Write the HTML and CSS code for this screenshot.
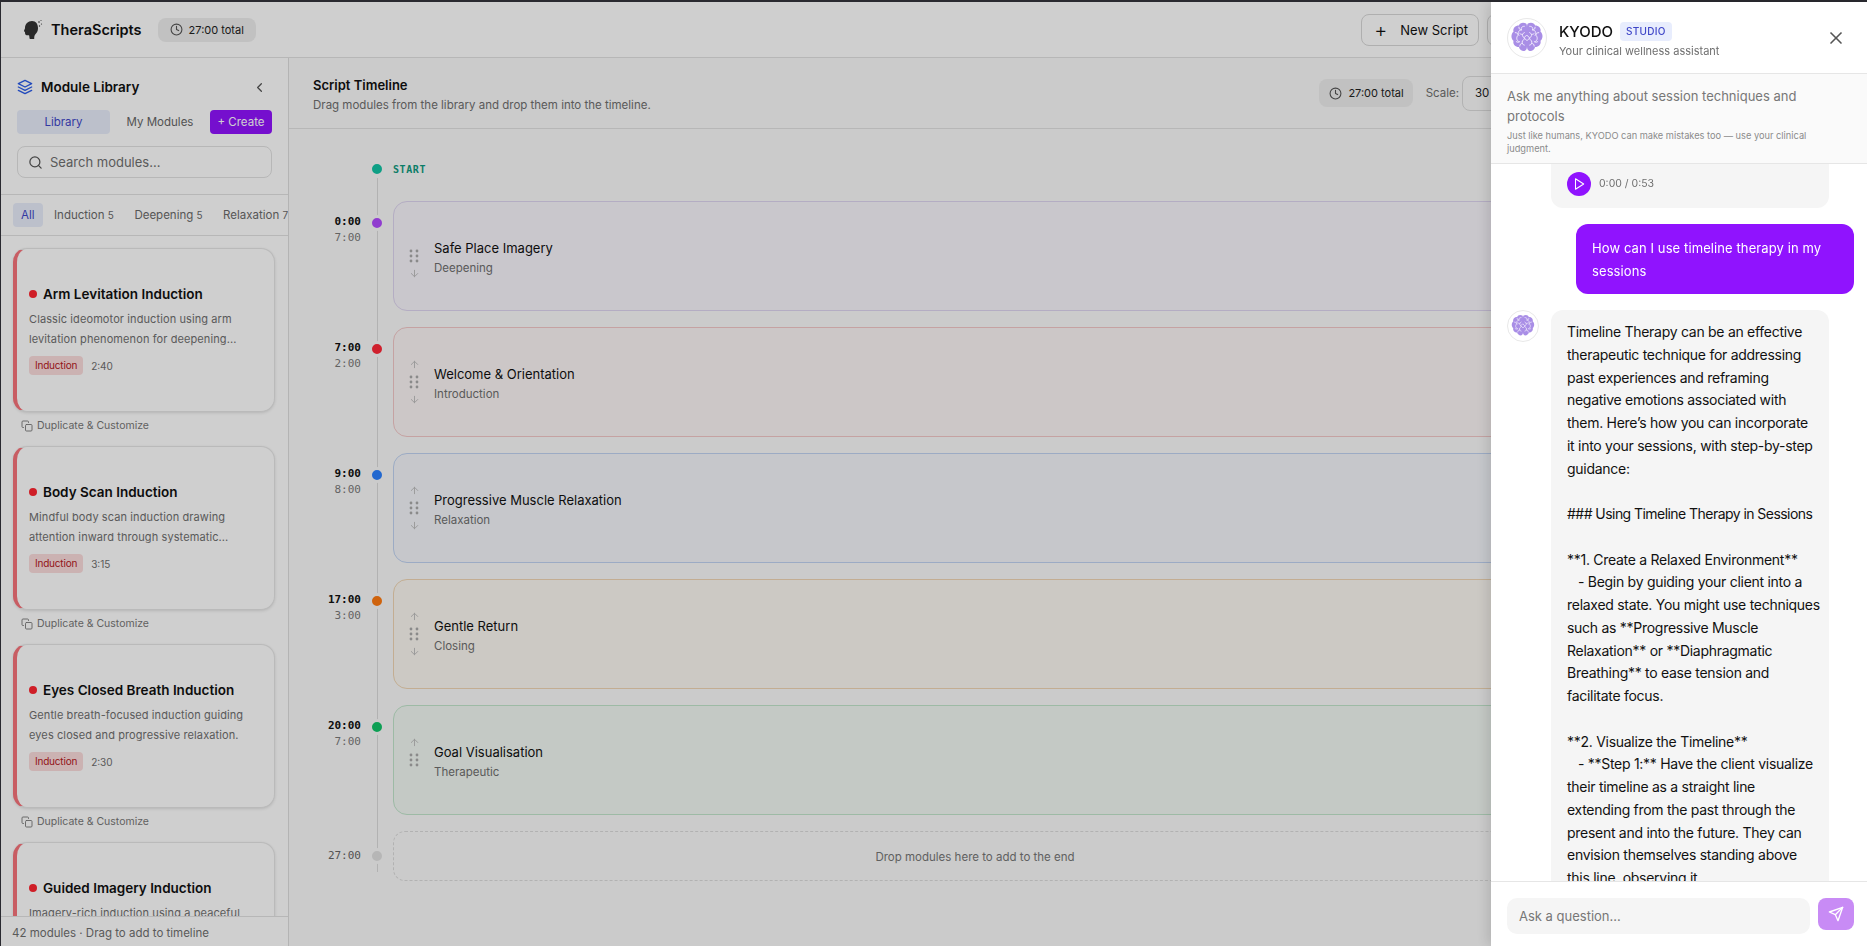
FILE: index.html
```html
<!DOCTYPE html>
<html lang="en">

<head>
  <meta charset="UTF-8">
  <title>TheraScripts</title>
  <link rel="stylesheet" href="styles.css">
</head>

<body>
  <svg class="sprite" xmlns="http://www.w3.org/2000/svg">
    <symbol id="i-clock" viewBox="0 0 24 24"><circle cx="12" cy="12" r="10"/><path d="M12 6v6l4 2"/></symbol>
    <symbol id="i-layers" viewBox="0 0 24 24"><path d="M12 2 2 7l10 5 10-5-10-5z"/><path d="m2 17 10 5 10-5"/><path d="m2 12 10 5 10-5"/></symbol>
    <symbol id="i-search" viewBox="0 0 24 24"><circle cx="11" cy="11" r="8"/><path d="m21 21-4.35-4.35"/></symbol>
    <symbol id="i-copy" viewBox="0 0 24 24"><rect x="9" y="9" width="13" height="13" rx="2"/><path d="M5 15H4a2 2 0 0 1-2-2V4a2 2 0 0 1 2-2h9a2 2 0 0 1 2 2v1"/></symbol>
    <symbol id="i-up" viewBox="0 0 24 24"><path d="M12 19V5"/><path d="m5 12 7-7 7 7"/></symbol>
    <symbol id="i-down" viewBox="0 0 24 24"><path d="M12 5v14"/><path d="m19 12-7 7-7-7"/></symbol>
    <symbol id="i-grip" viewBox="0 0 10 14"><circle cx="2" cy="2" r="1.4"/><circle cx="8" cy="2" r="1.4"/><circle cx="2" cy="7" r="1.4"/><circle cx="8" cy="7" r="1.4"/><circle cx="2" cy="12" r="1.4"/><circle cx="8" cy="12" r="1.4"/></symbol>
    <symbol id="i-brain" viewBox="0 0 40 40">
      <path class="lobe" d="M19 4c-3-2-7-1-8 2-4 0-7 3-6 7-3 2-3 8 0 10-1 4 2 7 6 7 1 4 6 6 8 3 1-1 1-3 1-5V9c0-2 0-4-1-5z"/>
      <path class="lobe" d="M21 4c3-2 7-1 8 2 4 0 7 3 6 7 3 2 3 8 0 10 1 4-2 7-6 7-1 4-6 6-8 3-1-1-1-3-1-5V9c0-2 0-4 1-5z"/>
      <path class="fold" d="M17 7c-3 0-4 2-3 4-3 0-5 3-3 6M7 14c2 0 3 1 3 3-2 2-2 6 1 7M17 14c-2 1-3 3-1 5 2 1 1 3-1 4-1 2 0 5 2 5M11 8c0 2 1 3 3 3M8 24c1 1 3 1 4 0M12 29c0-2 1-3 3-3M15 16c-1 0-2 0-3-1"/>
      <path class="fold" d="M23 7c3 0 4 2 3 4 3 0 5 3 3 6M33 14c-2 0-3 1-3 3 2 2 2 6-1 7M23 14c2 1 3 3 1 5-2 1-1 3 1 4 1 2 0 5-2 5M29 8c0 2-1 3-3 3M32 24c-1 1-3 1-4 0M28 29c0-2-1-3-3-3M25 16c1 0 2 0 3-1"/>
      <path class="fold" d="M20 17l3 3-3 3-3-3z"/>
    </symbol>
  </svg>

  <div class="app">
    <header class="topbar">
      <svg class="logo" viewBox="0 0 20 22">
        <path d="M9 2c-4 0-7 3-7 7 0 1-1 2-1 3 0 .6 1 .7 1 1.200 0 1 0 2.300 1 2.800 1 .4 2 0 3 .3.500 1 .3 2.700.8 3.700h4.400c0-2 0-3 1-4.500 1.500-1.500 2.800-3.500 2.800-6C15 5 13 2 9 2z"/>
        <circle cx="16" cy="3" r=".8"/><circle cx="18.500" cy="5" r=".6"/><circle cx="16.500" cy="7" r=".7"/><circle cx="18" cy="1.500" r=".5"/>
      </svg>
      <span class="brand">TheraScripts</span>
      <span class="pill"><svg class="icon"><use href="#i-clock"/></svg>27:00 total</span>
      <div class="topbar-actions">
        <button class="btn"><span class="btn-plus">+</span>New Script</button>
        <button class="btn btn-more">Save</button>
      </div>
    </header>

    <div class="workspace">
      <aside class="library">
        <div class="library-top">
          <div class="library-title">
            <svg class="icon icon-blue"><use href="#i-layers"/></svg>
            <h2>Module Library</h2>
            <svg class="chevron" viewBox="0 0 24 24"><path d="m15 18-6-6 6-6"/></svg>
          </div>
          <div class="tabs">
            <button class="tab tab-active">Library</button>
            <button class="tab">My Modules</button>
            <button class="tab tab-create">+ Create</button>
          </div>
          <div class="search">
            <svg class="icon"><use href="#i-search"/></svg>
            <span>Search modules...</span>
          </div>
        </div>

        <div class="filters">
          <span class="chip chip-active">All</span>
          <span class="chip">Induction <small>5</small></span>
          <span class="chip">Deepening <small>5</small></span>
          <span class="chip">Relaxation <small>7</small></span>
        </div>

        <div class="module-list">
          <div class="module">
            <div class="module-card">
              <h3><i></i>Arm Levitation Induction</h3>
              <p>Classic ideomotor induction using arm levitation phenomenon for deepening...</p>
              <div class="module-meta"><span class="tag">Induction</span><span>2:40</span></div>
            </div>
            <div class="duplicate"><svg class="icon"><use href="#i-copy"/></svg>Duplicate &amp; Customize</div>
          </div>
          <div class="module">
            <div class="module-card">
              <h3><i></i>Body Scan Induction</h3>
              <p>Mindful body scan induction drawing attention inward through systematic...</p>
              <div class="module-meta"><span class="tag">Induction</span><span>3:15</span></div>
            </div>
            <div class="duplicate"><svg class="icon"><use href="#i-copy"/></svg>Duplicate &amp; Customize</div>
          </div>
          <div class="module">
            <div class="module-card">
              <h3><i></i>Eyes Closed Breath Induction</h3>
              <p>Gentle breath-focused induction guiding eyes closed and progressive relaxation.</p>
              <div class="module-meta"><span class="tag">Induction</span><span>2:30</span></div>
            </div>
            <div class="duplicate"><svg class="icon"><use href="#i-copy"/></svg>Duplicate &amp; Customize</div>
          </div>
          <div class="module">
            <div class="module-card">
              <h3><i></i>Guided Imagery Induction</h3>
              <p>Imagery-rich induction using a peaceful garden walk to settle the mind.</p>
              <div class="module-meta"><span class="tag">Induction</span><span>3:00</span></div>
            </div>
          </div>
        </div>

        <div class="library-foot">42 modules · Drag to add to timeline</div>
      </aside>

      <main class="editor">
        <div class="toolbar">
          <div>
            <h2>Script Timeline</h2>
            <p>Drag modules from the library and drop them into the timeline.</p>
          </div>
          <div class="toolbar-right">
            <span class="pill"><svg class="icon"><use href="#i-clock"/></svg>27:00 total</span>
            <label>Scale:</label>
            <span class="select">30 min</span>
          </div>
        </div>

        <div class="timeline">
          <div class="row row-start">
            <div class="times"></div>
            <span class="dot dot-start"></span>
            <span class="start-label">START</span>
          </div>

          <div class="row">
            <div class="times"><b>0:00</b><span>7:00</span></div>
            <span class="dot dot-purple"></span>
            <div class="block block-purple">
              <div class="handle">
                <svg class="arrow arrow-off"><use href="#i-up"/></svg>
                <svg class="grip"><use href="#i-grip"/></svg>
                <svg class="arrow"><use href="#i-down"/></svg>
              </div>
              <div class="block-text"><h4>Safe Place Imagery</h4><p>Deepening</p></div>
            </div>
          </div>

          <div class="row">
            <div class="times"><b>7:00</b><span>2:00</span></div>
            <span class="dot dot-red"></span>
            <div class="block block-red">
              <div class="handle">
                <svg class="arrow"><use href="#i-up"/></svg>
                <svg class="grip"><use href="#i-grip"/></svg>
                <svg class="arrow"><use href="#i-down"/></svg>
              </div>
              <div class="block-text"><h4>Welcome &amp; Orientation</h4><p>Introduction</p></div>
            </div>
          </div>

          <div class="row">
            <div class="times"><b>9:00</b><span>8:00</span></div>
            <span class="dot dot-blue"></span>
            <div class="block block-blue">
              <div class="handle">
                <svg class="arrow"><use href="#i-up"/></svg>
                <svg class="grip"><use href="#i-grip"/></svg>
                <svg class="arrow"><use href="#i-down"/></svg>
              </div>
              <div class="block-text"><h4>Progressive Muscle Relaxation</h4><p>Relaxation</p></div>
            </div>
          </div>

          <div class="row">
            <div class="times"><b>17:00</b><span>3:00</span></div>
            <span class="dot dot-orange"></span>
            <div class="block block-orange">
              <div class="handle">
                <svg class="arrow"><use href="#i-up"/></svg>
                <svg class="grip"><use href="#i-grip"/></svg>
                <svg class="arrow"><use href="#i-down"/></svg>
              </div>
              <div class="block-text"><h4>Gentle Return</h4><p>Closing</p></div>
            </div>
          </div>

          <div class="row">
            <div class="times"><b>20:00</b><span>7:00</span></div>
            <span class="dot dot-green"></span>
            <div class="block block-green">
              <div class="handle">
                <svg class="arrow"><use href="#i-up"/></svg>
                <svg class="grip"><use href="#i-grip"/></svg>
                <svg class="arrow arrow-off"><use href="#i-down"/></svg>
              </div>
              <div class="block-text"><h4>Goal Visualisation</h4><p>Therapeutic</p></div>
            </div>
          </div>

          <div class="row row-end">
            <div class="times"><b class="end-time">27:00</b></div>
            <span class="dot dot-end"></span>
            <div class="dropzone">Drop modules here to add to the end</div>
          </div>
        </div>
      </main>
    </div>
  </div>

  <div class="backdrop"></div>

  <section class="chat">
    <div class="chat-head">
      <span class="avatar"><svg><use href="#i-brain"/></svg></span>
      <div class="chat-title">
        <div><strong>KYODO</strong><span class="badge">STUDIO</span></div>
        <p>Your clinical wellness assistant</p>
      </div>
      <svg class="close" viewBox="0 0 24 24"><path d="M18 6 6 18"/><path d="m6 6 12 12"/></svg>
    </div>

    <div class="chat-intro">
      <p>Ask me anything about session techniques and protocols</p>
      <small>Just like humans, KYODO can make mistakes too — use your clinical judgment.</small>
    </div>

    <div class="chat-messages">
      <div class="bubble bubble-audio">
        <span class="play"><svg viewBox="0 0 24 24"><path d="M6 3l14 9-14 9z"/></svg></span>
        <span>0:00 / 0:53</span>
      </div>
      <div class="bubble bubble-user">How can I use timeline therapy in my sessions</div>
      <div class="bot-row">
        <span class="avatar avatar-small"><svg><use href="#i-brain"/></svg></span>
        <div class="bubble bubble-bot">Timeline Therapy can be an effective
therapeutic technique for addressing
past experiences and reframing
negative emotions associated with
them. Here’s how you can incorporate
it into your sessions, with step-by-step
guidance:

<span class="tight">### Using Timeline Therapy in Sessions</span>

**1. Create a Relaxed Environment**
   - Begin by guiding your client into a
relaxed state. You might use techniques
such as **Progressive Muscle
Relaxation** or **Diaphragmatic
Breathing** to ease tension and
facilitate focus.

**2. Visualize the Timeline**
   - **Step 1:** Have the client visualize
their timeline as a straight line
extending from the past through the
present and into the future. They can
envision themselves standing above
this line, observing it.</div>
      </div>
    </div>

    <div class="chat-input">
      <div class="ask">Ask a question...</div>
      <button class="send"><svg viewBox="0 0 24 24"><path d="M22 2 11 13"/><path d="M22 2 15 22 11 13 2 9z"/></svg></button>
    </div>
  </section>
</body>
</html>
```

FILE: styles.css
```css
:root {
  --purple: #9013fe;
  --line: #e6e6e6;
  --text: #111;
  --muted: #6f6f6f;
}

* {
  box-sizing: border-box;
}

html, body {
  margin: 0;
  height: 100%;
  overflow: hidden;
}

body {
  font-family: Inter, "Noto Sans", sans-serif;
  color: var(--text);
  background: #fff;
}

h2, h3, h4, p {
  margin: 0;
}

button {
  font: inherit;
  border: 0;
  background: none;
  padding: 0;
}

.sprite {
  display: none;
}

.icon {
  width: 14px;
  height: 14px;
  flex: none;
  fill: none;
  stroke: currentColor;
  stroke-width: 2;
  stroke-linecap: round;
  stroke-linejoin: round;
}

.app {
  height: 946px;
  display: flex;
  flex-direction: column;
  border-top: 2px solid #2a2a30;
  border-left: 1px solid #2a2a30;
}

/* top bar */
.topbar {
  height: 56px;
  flex: none;
  display: flex;
  align-items: center;
  padding-left: 22px;
  background: #fff;
  border-bottom: 1px solid #e2e2e2;
}

.logo {
  width: 20px;
  height: 22px;
  fill: #333;
  margin-right: 8px;
}

.brand {
  font-size: 14.500px;
  font-weight: 600;
  margin-right: 16px;
}

.pill {
  display: inline-flex;
  align-items: center;
  gap: 6px;
  height: 24px;
  padding: 0 12px;
  border-radius: 8px;
  font-size: 11px;
  background: #eee;
  color: #222;
}

.topbar .pill .icon,
.toolbar .pill .icon {
  width: 13px;
  height: 13px;
  color: #555;
}

.topbar-actions {
  margin-left: auto;
  display: flex;
  gap: 8px;
  padding-right: 320px;
}

.btn {
  height: 32px;
  display: flex;
  align-items: center;
  padding: 0 10px 0 12px;
  border: 1px solid #d8d8d8;
  border-radius: 8px;
  font-size: 13px;
  background: #fff;
  color: #111;
}

.btn-plus {
  font-size: 20px;
  font-weight: 300;
  width: 26px;
  text-align: left;
  line-height: 1;
}

.btn-more {
  width: 60px;
}

.workspace {
  flex: 1;
  display: flex;
  min-height: 0;
}

/* module library */
.library {
  width: 288px;
  flex: none;
  display: flex;
  flex-direction: column;
  background: #fff;
  border-right: 1px solid #dedede;
}

.library-top {
  height: 137px;
  flex: none;
  padding: 21px 16px 0;
  border-bottom: 1px solid #e2e2e2;
}

.library-title {
  display: flex;
  align-items: center;
  gap: 8px;
  height: 16px;
}

.library-title h2 {
  font-size: 13.500px;
  font-weight: 600;
}

.icon-blue {
  width: 16px;
  height: 16px;
  color: #2a5ce8;
}

.chevron {
  width: 15px;
  height: 15px;
  margin-left: auto;
  margin-right: 5px;
  fill: none;
  stroke: #555;
  stroke-width: 2;
  stroke-linecap: round;
  stroke-linejoin: round;
}

.tabs {
  display: flex;
  margin-top: 15px;
  width: 255px;
}

.tab {
  height: 24px;
  flex: 1;
  font-size: 11.500px;
  border-radius: 4px;
  color: #666;
}

.tab-active {
  flex: none;
  width: 93px;
  background: #e8edfb;
  color: #3f46c8;
}

.tab-create {
  flex: none;
  width: 62px;
  background: var(--purple);
  color: #fff;
}

.search {
  margin-top: 12px;
  width: 255px;
  height: 32px;
  display: flex;
  align-items: center;
  gap: 7px;
  padding: 0 10px;
  border: 1.500px solid #e2e2e2;
  border-radius: 8px;
  font-size: 13px;
  color: #6f6f6f;
}

.search .icon {
  width: 15px;
  height: 15px;
  color: #555;
}

.filters {
  height: 41px;
  flex: none;
  display: flex;
  align-items: center;
  padding: 0 12px;
  gap: 2.500px;
  overflow: hidden;
  white-space: nowrap;
  border-bottom: 1px solid #e2e2e2;
}

.chip {
  height: 24px;
  line-height: 24px;
  padding: 0 9px;
  border-radius: 4px;
  font-size: 11.500px;
  color: #6b6b6b;
}

.chip small {
  font-size: 10px;
}

.chip-active {
  padding: 0 8px;
  background: #e8edfb;
  color: #3f46c8;
}

.module-list {
  flex: 1;
  min-height: 0;
  overflow: hidden;
  padding: 12px 12px 0;
}

.module {
  height: 198px;
}

.module-card {
  height: 164px;
  width: 262px;
  padding: 36px 14px 0 12px;
  border: 1px solid #e6e6e6;
  border-left: 4px solid #f7737b;
  border-radius: 14px;
  box-shadow: 0 1px 3px rgba(0, 0, 0, 0.12);
  background: #fff;
}

.module-card h3 {
  display: flex;
  align-items: center;
  gap: 6px;
  font-size: 13.500px;
  font-weight: 600;
  line-height: 18px;
}

.module-card h3 i {
  width: 8px;
  height: 8px;
  border-radius: 50%;
  background: #ff2630;
}

.module-card p {
  margin-top: 6px;
  font-size: 11px;
  letter-spacing: 0.1px;
  line-height: 20px;
  color: #6f6f6f;
}

.module-meta {
  margin-top: 7px;
  display: flex;
  align-items: center;
  gap: 8px;
  font-size: 10px;
  color: #6f6f6f;
}

.tag {
  height: 19px;
  line-height: 19px;
  padding: 0 6px;
  border-radius: 4px;
  letter-spacing: -0.2px;
  background: #fbdcdc;
  color: #b51822;
}

.duplicate {
  display: flex;
  align-items: center;
  gap: 4px;
  margin: 6px 0 0 8px;
  font-size: 10.500px;
  line-height: 16px;
  color: #777;
}

.duplicate .icon {
  width: 12px;
  height: 12px;
  stroke-width: 1.800;
}

.library-foot {
  height: 30px;
  flex: none;
  padding: 6px 0 0 11px;
  line-height: 20px;
  font-size: 11.500px;
  color: #6f6f6f;
  background: #fff;
  border-top: 1px solid #e2e2e2;
}

/* timeline editor */
.editor {
  flex: 1;
  min-width: 0;
  background: #fafafa;
}

.toolbar {
  height: 71px;
  display: flex;
  align-items: center;
  justify-content: space-between;
  padding: 4px 24px 0;
  background: #fafafa;
  border-bottom: 1px solid #e2e2e2;
}

.toolbar h2 {
  font-size: 13px;
  font-weight: 600;
  line-height: 20px;
}

.toolbar p {
  font-size: 11.500px;
  line-height: 20px;
  color: #6f6f6f;
}

.toolbar-right {
  display: flex;
  align-items: center;
  padding-right: 291px;
  margin-top: -4px;
  font-size: 11.500px;
  color: #6f6f6f;
}

.toolbar-right .pill {
  height: 28px;
  padding: 0 9px 0 10px;
  margin-right: 13px;
}

.select {
  width: 90px;
  height: 35px;
  line-height: 33px;
  margin-left: 3px;
  padding-left: 12px;
  border: 1px solid #dcdcdc;
  border-radius: 8px;
  color: #222;
}

.timeline {
  position: relative;
  max-width: 1268px;
  padding-top: 32px;
}

/* rail behind the dots */
.timeline::before {
  content: "";
  position: absolute;
  left: 88px;
  top: 49px;
  bottom: 9px;
  width: 1px;
  background: #dcdcdc;
}

.row {
  position: relative;
  display: flex;
  align-items: flex-start;
  margin-bottom: 16px;
}

.row-start {
  align-items: center;
  height: 16px;
  margin-bottom: 24px;
}

.row-end {
  align-items: center;
  margin-bottom: 0;
}

.times {
  width: 72px;
  flex: none;
  padding-top: 13px;
  text-align: right;
  font-family: "DejaVu Sans Mono", monospace;
  font-size: 11px;
  line-height: 16px;
  color: #7b7b7b;
}

.row-start .times,
.row-end .times {
  padding-top: 0;
}

.times b,
.times span {
  display: block;
}

.times b {
  color: #111;
}

.times .end-time {
  font-weight: 400;
  color: #666;
}

.dot {
  position: relative;
  width: 16px;
  height: 16px;
  flex: none;
  margin: 14px 8px 0 8px;
  border-radius: 50%;
  border: 3px solid #fafafa;
}

.row-start .dot,
.row-end .dot {
  margin-top: 0;
}

.dot-start { background: #12c4a4; }
.dot-purple { background: #b24bff; }
.dot-red { background: #ff2838; }
.dot-blue { background: #2a80ff; }
.dot-orange { background: #ff7a10; }
.dot-green { background: #10c468; }
.dot-end { background: #e0e0e0; }

.start-label {
  font-family: "DejaVu Sans Mono", monospace;
  font-size: 10px;
  font-weight: 700;
  letter-spacing: 0.6px;
  color: #0f9b80;
}

.block {
  flex: 1;
  height: 110px;
  display: flex;
  align-items: center;
  gap: 15px;
  padding-left: 15px;
  border: 1px solid;
  border-radius: 14px;
}

.block-text {
  padding-top: 4px;
}

.block h4 {
  font-size: 13px;
  font-weight: 400;
  line-height: 20px;
}

.block p {
  font-size: 11.500px;
  line-height: 20px;
  color: #6f6f6f;
}

.block-purple { background: #f8f5fc; border-color: #ded5f0; }
.block-red { background: #fcf6f6; border-color: #f3c8c8; }
.block-blue { background: #f4f6fb; border-color: #c0d3f2; }
.block-orange { background: #fcf8f2; border-color: #f0d6b4; }
.block-green { background: #f2f8f3; border-color: #c2e6cc; }

.handle {
  width: 10px;
  display: flex;
  flex-direction: column;
  align-items: center;
  gap: 5px;
}

.grip {
  width: 10px;
  height: 14px;
  fill: #aaa;
}

.arrow {
  width: 11px;
  height: 11px;
  fill: none;
  stroke: #bbb;
  stroke-width: 2;
  stroke-linecap: round;
  stroke-linejoin: round;
}

.arrow-off {
  visibility: hidden;
}

.dropzone {
  flex: 1;
  height: 50px;
  line-height: 50px;
  text-align: center;
  font-size: 11.500px;
  color: #777;
  border: 1px dashed #dcdcdc;
  border-radius: 12px;
}

/* overlay and assistant panel */
.backdrop {
  position: fixed;
  inset: 2px 0 0 1px;
  background: rgba(0, 0, 0, 0.19);
}

.chat {
  position: fixed;
  top: 2px;
  right: 0;
  bottom: 0;
  width: 376px;
  display: flex;
  flex-direction: column;
  background: #fff;
  box-shadow: -4px 0 12px rgba(0, 0, 0, 0.12);
}

.chat-head {
  height: 72px;
  flex: none;
  display: flex;
  align-items: center;
  padding: 0 16px;
  gap: 12px;
  border-bottom: 1px solid var(--line);
}

.avatar {
  width: 40px;
  height: 40px;
  flex: none;
  display: flex;
  align-items: center;
  justify-content: center;
  border: 1px solid #e8e8e8;
  border-radius: 50%;
  background: #fff;
}

.avatar svg {
  width: 36px;
  height: 36px;
}

.avatar-small {
  width: 32px;
  height: 32px;
}

.avatar-small svg {
  width: 26px;
  height: 26px;
}

.lobe {
  fill: #a98ee6;
}

.fold {
  fill: none;
  stroke: #efe9fb;
  stroke-width: 1.100;
  stroke-linecap: round;
}

.chat-title {
  margin-top: 7px;
}

.chat-title strong {
  font-size: 15px;
  font-weight: 500;
}

.chat-title > div {
  display: flex;
  align-items: center;
  gap: 7px;
  height: 20px;
}

.chat-title p {
  font-size: 11px;
  line-height: 20px;
  color: #6f6f6f;
}

.badge {
  font-size: 10px;
  font-weight: 500;
  line-height: 19px;
  padding: 0 6px;
  border-radius: 4px;
  letter-spacing: 0.3px;
  color: #3f46c8;
  background: #e8edfd;
}

.close {
  width: 20px;
  height: 20px;
  margin-left: auto;
  margin-right: 5px;
  fill: none;
  stroke: #555;
  stroke-width: 2;
  stroke-linecap: round;
}

.chat-intro {
  height: 90px;
  flex: none;
  padding: 12px 16px 0;
  background: #fafafa;
  border-bottom: 1px solid var(--line);
}

.chat-intro p {
  font-size: 13px;
  line-height: 20px;
  color: #777;
}

.chat-intro small {
  display: block;
  font-size: 9.250px;
  line-height: 13px;
  margin-top: 3px;
  color: #8a8a8a;
}

.chat-messages {
  flex: 1;
  min-height: 0;
  overflow: hidden;
  display: flex;
  flex-direction: column;
  padding: 0 13px 0 16px;
}

.bubble {
  width: 278px;
  flex: none;
  padding: 0 16px;
  font-size: 14px;
  line-height: 22.750px;
  background: #f5f5f5;
  border-radius: 12px;
}

.bubble-audio {
  height: 44px;
  margin-left: 44px;
  display: flex;
  align-items: center;
  gap: 8px;
  padding: 0 16px 4px;
  border-radius: 0 0 12px 12px;
  font-size: 10.500px;
  color: #6f6f6f;
}

.play {
  width: 24px;
  height: 24px;
  display: flex;
  align-items: center;
  justify-content: center;
  border-radius: 50%;
  background: var(--purple);
}

.play svg {
  width: 14px;
  height: 14px;
  fill: none;
  stroke: #fff;
  stroke-width: 1.800;
  stroke-linejoin: round;
}

.bubble-user {
  margin: 16px 0 16px auto;
  padding: 13px 16px 11.500px;
  font-size: 13px;
  letter-spacing: 0.1px;
  color: #fff;
  background: var(--purple);
}

.bot-row {
  display: flex;
  align-items: flex-start;
  gap: 12px;
}

.bubble-bot {
  padding: 11px 0 11px 16px;
  white-space: pre;
  letter-spacing: -0.28px;
  color: #111;
}

.tight {
  letter-spacing: -0.55px;
}

.chat-input {
  height: 65px;
  flex: none;
  display: flex;
  align-items: flex-start;
  gap: 8px;
  padding: 16px 13px 0 16px;
  border-top: 1px solid var(--line);
  background: #fff;
}

.ask {
  flex: 1;
  height: 36px;
  line-height: 36px;
  padding-left: 12px;
  font-size: 13px;
  color: #777;
  border-radius: 10px;
  background: #f5f5f5;
}

.send {
  width: 36px;
  height: 32px;
  display: flex;
  align-items: center;
  justify-content: center;
  border-radius: 8px;
  background: #c88bf5;
}

.send svg {
  width: 16px;
  height: 16px;
  fill: none;
  stroke: #fff;
  stroke-width: 2;
  stroke-linecap: round;
  stroke-linejoin: round;
}
```
